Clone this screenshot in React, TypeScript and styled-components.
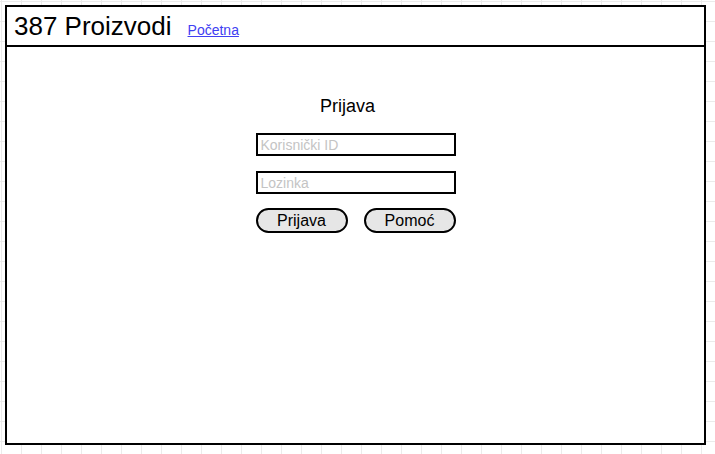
import React from "react";
import styled, { createGlobalStyle } from "styled-components";

const GlobalStyle = createGlobalStyle`
  html, body {
    margin: 0;
    padding: 0;
  }
  body {
    font-family: "Liberation Sans", Arial, sans-serif;
    background-color: #ffffff;
    background-image:
      linear-gradient(to right, #ebebeb 1px, transparent 1px),
      linear-gradient(to bottom, #ebebeb 1px, transparent 1px);
    background-size: 20px 20px;
    background-position: 1px 1px;
    min-height: 454px;
  }
`;

const Frame = styled.div`
  box-sizing: border-box;
  margin: 5px 0 0 5px;
  width: 701px;
  height: 440px;
  border: 2px solid #000;
  background: #fff;
  display: flex;
  flex-direction: column;
`;

const Header = styled.header`
  box-sizing: border-box;
  height: 40px;
  border-bottom: 2px solid #000;
  display: flex;
  align-items: baseline;
  gap: 16px;
  padding: 4px 0 0 7px;
`;

const Brand = styled.div`
  font-size: 26px;
  color: #000;
`;

const NavLink = styled.a`
  font-size: 14px;
  color: #4040f2;
  text-decoration: underline;
`;

const Main = styled.main`
  flex: 1;
  display: flex;
  justify-content: center;
  padding-top: 49px;
`;

const LoginForm = styled.form`
  width: 200px;
  display: flex;
  flex-direction: column;
`;

const Title = styled.h2`
  margin: 0 0 16px;
  padding-right: 16px;
  text-align: center;
  font-size: 18px;
  font-weight: normal;
  line-height: 21px;
  color: #000;
`;

const Field = styled.input`
  box-sizing: border-box;
  width: 200px;
  height: 23px;
  margin: 0 0 15px;
  padding: 0 3px;
  border: 2px solid #000;
  border-radius: 0;
  outline: none;
  font-family: "Liberation Sans", Arial, sans-serif;
  font-size: 14px;
  color: #000;
  background: #fff;

  &::placeholder {
    color: #c4c4c4;
  }
`;

const ButtonRow = styled.div`
  display: flex;
  justify-content: space-between;
  margin-top: -1px;
`;

const PillButton = styled.button`
  box-sizing: border-box;
  width: 92px;
  height: 25px;
  padding: 0;
  border: 2px solid #000;
  border-radius: 13px;
  background: #e6e6e6;
  font-family: "Liberation Sans", Arial, sans-serif;
  font-size: 16px;
  color: #000;
  cursor: pointer;
`;

export default function App() {
  return (
    <>
      <GlobalStyle />
      <Frame>
        <Header>
          <Brand>387 Proizvodi</Brand>
          <NavLink href="#">Početna</NavLink>
        </Header>
        <Main>
          <LoginForm onSubmit={(e) => e.preventDefault()}>
            <Title>Prijava</Title>
            <Field type="text" placeholder="Korisnički ID" />
            <Field type="password" placeholder="Lozinka" />
            <ButtonRow>
              <PillButton type="submit">Prijava</PillButton>
              <PillButton type="button">Pomoć</PillButton>
            </ButtonRow>
          </LoginForm>
        </Main>
      </Frame>
    </>
  );
}
